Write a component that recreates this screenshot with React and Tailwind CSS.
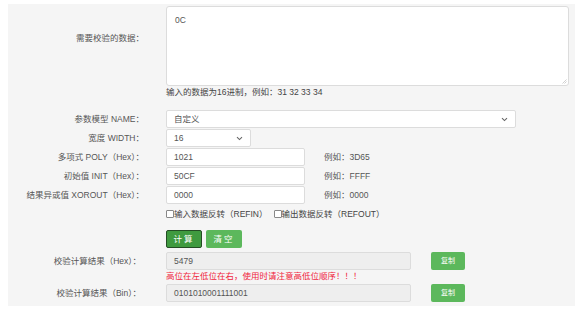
import { useState } from 'react'

const font = { fontFamily: '"Liberation Sans", "Noto Sans CJK SC", sans-serif' }

const Label = ({ children, className = '' }) => (
  <div className={`w-[136px] shrink-0 text-right text-[8.5px] text-[#555] ${className}`}>{children}</div>
)

const Field = ({ value, className = '' }) => (
  <div className={`h-[18px] border border-[#dcdcdc] rounded-[2px] bg-white flex items-center px-[7px] text-[8.5px] text-[#555] ${className}`}>
    {value}
  </div>
)

const Chevron = () => (
  <svg width="7" height="5" viewBox="0 0 7 5" className="ml-auto">
    <path d="M1 1.2 L3.5 3.6 L6 1.2" fill="none" stroke="#666" strokeWidth="1.1" />
  </svg>
)

export default function App() {
  const [refin, setRefin] = useState(false)
  const [refout, setRefout] = useState(false)

  return (
    <div className="w-[582px] h-[313px] bg-white pt-[4px] pl-[8px]" style={font}>
      <div className="w-[567px] h-[302px] bg-[#f5f5f5] flex flex-col">
        <div className="flex mt-[2px]">
          <Label className="pt-[26px]">需要校验的数据：</Label>
          <div className="ml-[22px] flex flex-col">
            <div className="relative w-[403px] h-[80px] border border-[#dcdcdc] rounded-[3px] bg-white px-[8px] pt-[7px] text-[8.5px] text-[#555]">
              0C
              <svg width="5" height="5" viewBox="0 0 5 5" className="absolute right-[1px] bottom-[1px]">
                <path d="M4.5 0.5 L0.5 4.5 M4.5 2.5 L2.5 4.5" stroke="#bbb" strokeWidth="0.7" />
              </svg>
            </div>
            <div className="mt-[1px] text-[8.5px] text-[#444] leading-[10px]">输入的数据为16进制，例如：31 32 33 34</div>
          </div>
        </div>

        <div className="flex items-center mt-[13px]">
          <Label>参数模型 NAME：</Label>
          <Field className="ml-[22px] w-[350px]" value={<><span>自定义</span><Chevron /></>} />
        </div>

        <div className="flex items-center mt-[1px]">
          <Label>宽度 WIDTH：</Label>
          <Field className="ml-[22px] w-[85px]" value={<><span>16</span><Chevron /></>} />
        </div>

        {[
          ['多项式 POLY（Hex）：', '1021', '例如：3D65'],
          ['初始值 INIT（Hex）：', '50CF', '例如：FFFF'],
          ['结果异或值 XOROUT（Hex）：', '0000', '例如：0000'],
        ].map(([label, val, hint]) => (
          <div key={label} className="flex items-center mt-[1px]">
            <Label>{label}</Label>
            <Field className="ml-[22px] w-[139px]" value={val} />
            <div className="ml-[19px] text-[8.5px] text-[#555]">{hint}</div>
          </div>
        ))}

        <div className="flex items-center mt-[3px] ml-[158px] text-[8.5px] text-[#444] h-[14px]">
          <label className="flex items-center cursor-pointer" onClick={() => setRefin(!refin)}>
            <span className={`w-[8px] h-[8px] border border-[#888] rounded-[1px] ${refin ? 'bg-[#5cb85c]' : 'bg-white'}`} />
            <span>输入数据反转（REFIN）</span>
          </label>
          <label className="flex items-center cursor-pointer ml-[6px]" onClick={() => setRefout(!refout)}>
            <span className={`w-[8px] h-[8px] border border-[#888] rounded-[1px] ${refout ? 'bg-[#5cb85c]' : 'bg-white'}`} />
            <span>输出数据反转（REFOUT）</span>
          </label>
        </div>

        <div className="flex mt-[9px] ml-[158px] gap-[4px]">
          <button className="w-[36px] h-[18px] rounded-[2px] bg-[#3f9a3f] border-[1.5px] border-[#244d24] text-white text-[8.5px] tracking-[2px] flex items-center justify-center">计算</button>
          <button className="w-[36px] h-[18px] rounded-[2px] bg-[#5cb85c] text-white text-[8.5px] tracking-[2px] flex items-center justify-center">清空</button>
        </div>

        <div className="flex items-center mt-[4px]">
          <Label className="pr-[3px]">校验计算结果（Hex）：</Label>
          <Field className="ml-[22px] w-[245px] !bg-[#eeeeee]" value="5479" />
          <button className="ml-[20px] w-[34px] h-[18px] rounded-[2px] bg-[#5cb85c] text-white text-[7px]">复制</button>
        </div>
        <div className="ml-[158px] text-[8.5px] text-[#f0243c] leading-[12px]">高位在左低位在右，使用时请注意高低位顺序！！！</div>

        <div className="flex items-center mt-[2px]">
          <Label className="pr-[3px]">校验计算结果（Bin）：</Label>
          <Field className="ml-[22px] w-[245px] !bg-[#eeeeee]" value="0101010001111001" />
          <button className="ml-[20px] w-[34px] h-[18px] rounded-[2px] bg-[#5cb85c] text-white text-[7px]">复制</button>
        </div>
      </div>
    </div>
  )
}
